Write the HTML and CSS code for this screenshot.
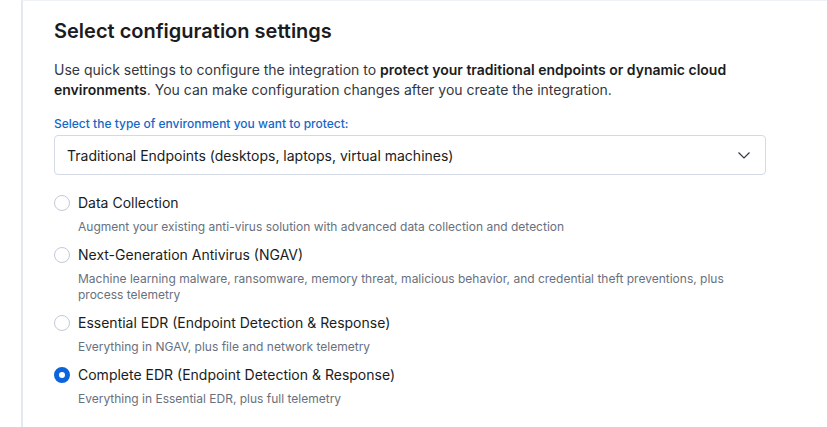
FILE: index.html
```html
<!DOCTYPE html>
<html lang="en">
<head>
    <meta charset="UTF-8">
    <meta name="viewport" content="width=device-width, initial-scale=1.0">
    <title>Select configuration settings</title>
    <link rel="stylesheet" href="styles.css">
</head>
<body>
    <div class="page">
        <div class="panel">
            <h2 class="title">Select configuration settings</h2>
            <p class="intro">Use quick settings to configure the integration to <strong>protect your traditional endpoints or dynamic cloud environments</strong>. You can make configuration changes after you create the integration.</p>

            <label class="field-label">Select the type of environment you want to protect:</label>
            <div class="select">
                <span>Traditional Endpoints (desktops, laptops, virtual machines)</span>
                <svg class="chevron" width="16" height="16" viewBox="0 0 16 16">
                    <path d="M2.5 5.5 L8 11 L13.5 5.5" fill="none" stroke="#343741" stroke-width="1.2"/>
                </svg>
            </div>

            <div class="options">
                <div class="option">
                    <div class="option-row">
                        <span class="radio"></span>
                        <span class="option-label">Data Collection</span>
                    </div>
                    <p class="option-help">Augment your existing anti-virus solution with advanced data collection and detection</p>
                </div>
                <div class="option">
                    <div class="option-row">
                        <span class="radio"></span>
                        <span class="option-label">Next-Generation Antivirus (NGAV)</span>
                    </div>
                    <p class="option-help">Machine learning malware, ransomware, memory threat, malicious behavior, and credential theft preventions, plus process telemetry</p>
                </div>
                <div class="option">
                    <div class="option-row">
                        <span class="radio"></span>
                        <span class="option-label">Essential EDR (Endpoint Detection &amp; Response)</span>
                    </div>
                    <p class="option-help">Everything in NGAV, plus file and network telemetry</p>
                </div>
                <div class="option">
                    <div class="option-row">
                        <span class="radio checked"></span>
                        <span class="option-label">Complete EDR (Endpoint Detection &amp; Response)</span>
                    </div>
                    <p class="option-help">Everything in Essential EDR, plus full telemetry</p>
                </div>
            </div>
        </div>
    </div>
</body>
</html>
```

FILE: styles.css
```css
body {
    margin: 0;
    background-color: #ffffff;
    font-family: Inter, "Noto Sans", sans-serif;
    color: #343741;
}

.page {
    padding-left: 21px;
}

.panel {
    border-left: 2px solid #e3e8f2;
    border-top: 1px solid #eef1f6;
    padding: 16px 61px 20px 31px;
    min-height: 427px;
    box-sizing: border-box;
}

.title {
    margin: 0 0 15px;
    font-size: 20px;
    line-height: 28px;
    font-weight: 600;
    color: #1a1c21;
}

.intro {
    margin: 0 0 16px;
    font-size: 14px;
    line-height: 20px;
    color: #343741;
}

.intro strong {
    font-weight: 600;
    color: #1a1c21;
}

.field-label {
    display: block;
    font-size: 12px;
    line-height: 16px;
    font-weight: 500;
    color: #1567c7;
    margin-bottom: 3px;
}

.select {
    display: flex;
    align-items: center;
    justify-content: space-between;
    height: 40px;
    box-sizing: border-box;
    padding: 0 12px 0 12px;
    border: 1px solid #d3dae6;
    border-radius: 4px;
    font-size: 14px;
    color: #1a1c21;
    margin-bottom: 18px;
}

.chevron {
    margin-right: 1px;
}

.option {
    margin-bottom: 10px;
}

.option-row {
    display: flex;
    align-items: center;
    gap: 8px;
    height: 20px;
}

.radio {
    width: 16px;
    height: 16px;
    box-sizing: border-box;
    border: 1px solid #c2cad6;
    border-radius: 50%;
    background-color: #ffffff;
    flex-shrink: 0;
}

.radio.checked {
    border: 5px solid #0b64dd;
    background-color: #ffffff;
}

.option-label {
    font-size: 14px;
    line-height: 20px;
    color: #1a1c21;
}

.option-help {
    margin: 6px 0 0 24px;
    font-size: 12px;
    line-height: 16px;
    color: #69707d;
}
```
